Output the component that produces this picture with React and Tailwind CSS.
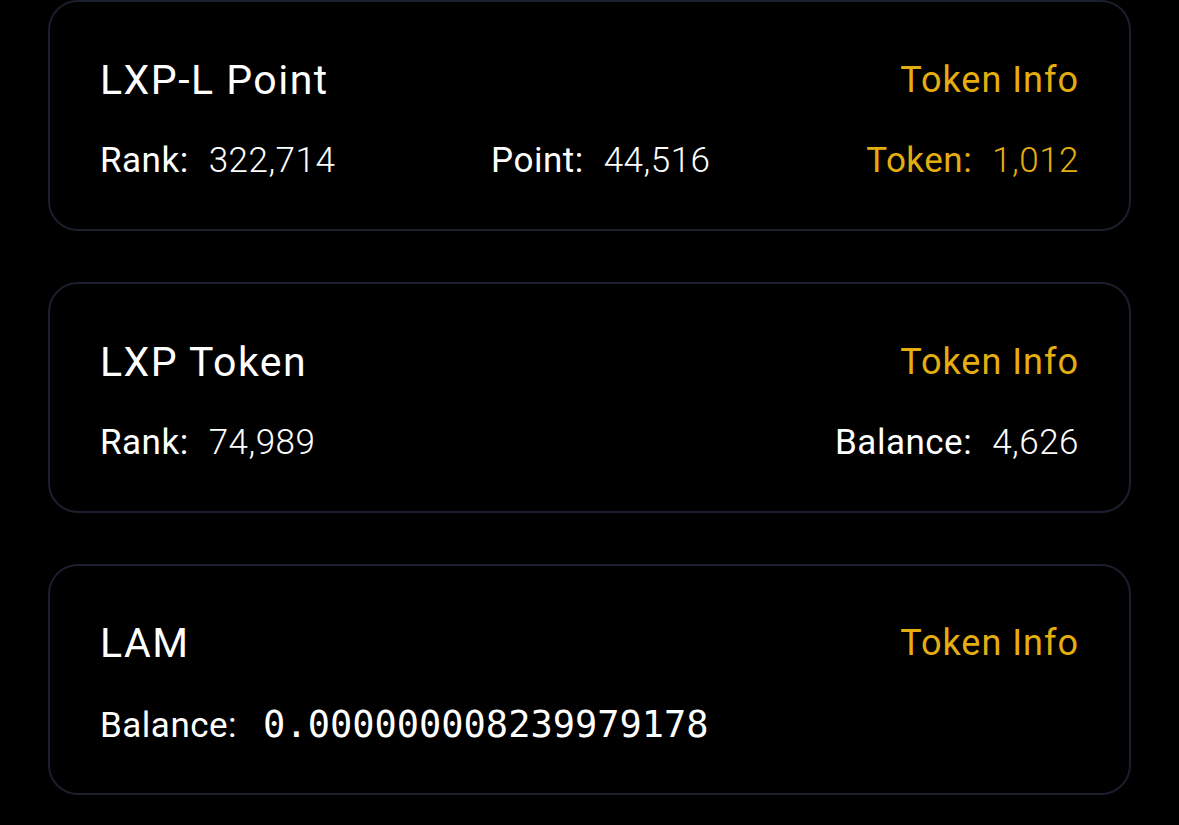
const cards = [
  {
    title: 'LXP-L Point',
    stats: [
      { label: 'Rank:', value: '322,714' },
      { label: 'Point:', value: '44,516' },
      { label: 'Token:', value: '1,012', gold: true },
    ],
  },
  {
    title: 'LXP Token',
    stats: [
      { label: 'Rank:', value: '74,989' },
      { label: 'Balance:', value: '4,626' },
    ],
  },
  {
    title: 'LAM',
    stats: [{ label: 'Balance:', value: '0.000000008239979178', mono: true }],
  },
];

function Stat({ label, value, gold, mono }) {
  return (
    <div
      className={`flex items-baseline ${mono ? 'gap-[26px]' : 'gap-[20px]'} ${
        gold ? 'text-[#e5ae10]' : 'text-white'
      }`}
    >
      <span className="font-normal">{label}</span>
      <span
        className={
          mono
            ? "font-['DejaVu_Sans_Mono',monospace] text-[37px] tracking-normal"
            : 'font-light'
        }
      >
        {value}
      </span>
    </div>
  );
}

function Card({ title, stats }) {
  return (
    <div className="flex h-[231px] flex-col justify-center gap-[42px] rounded-[30px] border-2 border-[#1b1e2c] px-[50px] pt-[6px]">
      <div className="flex items-center justify-between">
        <h2 className="text-[41px] font-normal leading-none tracking-[1.5px] text-white">{title}</h2>
        <a className="text-[36px] leading-none tracking-[1px] text-[#e5ae10]">Token Info</a>
      </div>
      <div className="flex items-center justify-between text-[35px] leading-none tracking-[0.5px]">
        {stats.map((s) => (
          <Stat key={s.label} {...s} />
        ))}
      </div>
    </div>
  );
}

export default function App() {
  return (
    <div className="min-h-[825px] bg-black px-[48px] font-['Roboto',sans-serif]">
      <div className="flex flex-col gap-[51px] pb-[30px]">
        {cards.map((c) => (
          <Card key={c.title} {...c} />
        ))}
      </div>
    </div>
  );
}
